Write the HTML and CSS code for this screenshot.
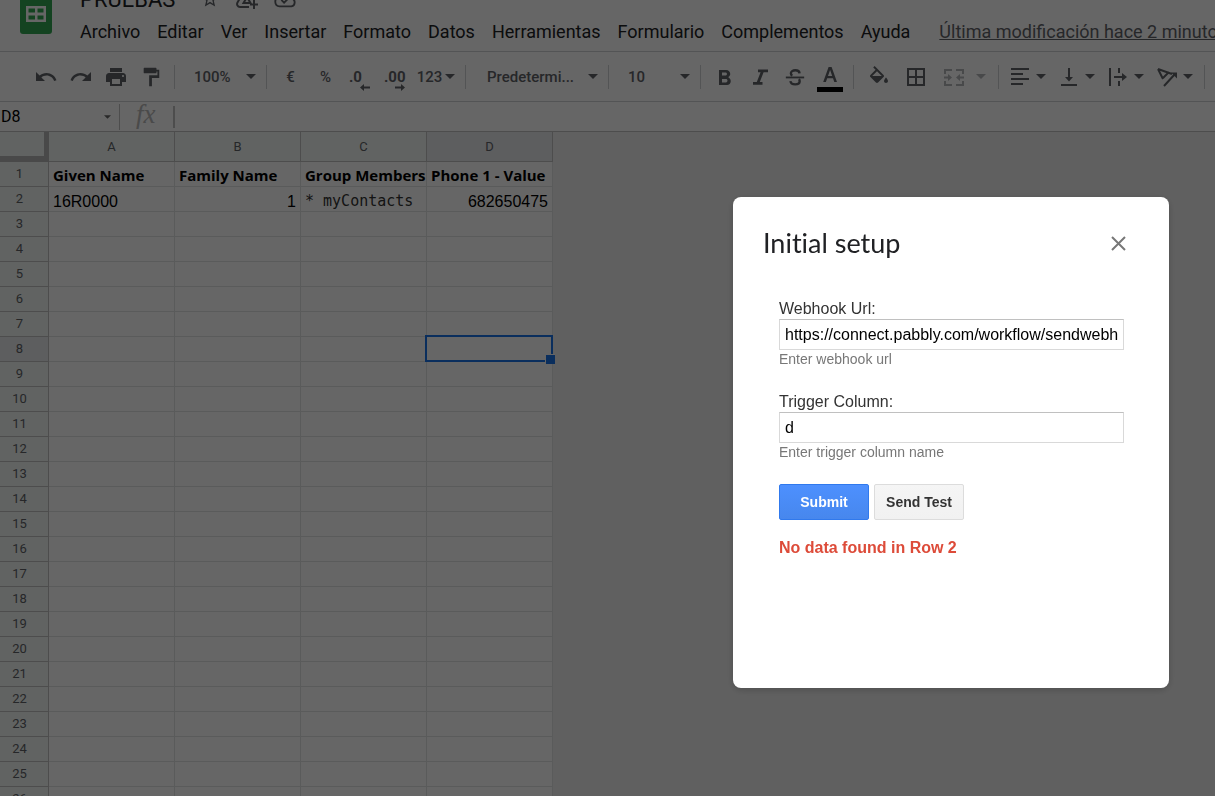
FILE: index.html
```html
<!DOCTYPE html>
<html lang="es">
<head>
    <meta charset="UTF-8">
    <meta name="viewport" content="width=device-width, initial-scale=1.0">
    <link rel="stylesheet" href="styles.css">
    <title>PRUEBAS</title>
</head>
<body>
<svg class="defs" aria-hidden="true">
    <symbol id="caret" viewBox="0 0 10 5"><path d="M0 0h10L5 5z"/></symbol>
</svg>

<header class="header">
    <a href="#" class="logo" aria-label="Sheets">
        <svg viewBox="0 0 32 46" width="32" height="46"><path d="M3 0h19l10 10v33a3 3 0 0 1-3 3H3a3 3 0 0 1-3-3V3a3 3 0 0 1 3-3z" fill="#34a853"/><path d="M6 18h20v16H6zM8.500 20.500v4h6.500v-4zM17.500 20.500v4h6v-4zM8.500 27.500v4h6.500v-4zM17.500 27.500v4h6v-4z" fill="#fff" fill-rule="evenodd"/></svg>
    </a>
    <div class="header-main">
        <div class="title-row">
            <span class="doc-title">PRUEBAS</span>
            <button class="icon-btn" aria-label="Destacar"><svg viewBox="0 0 24 24" width="20" height="20"><path d="M22 9.240l-7.190-.62L12 2 9.190 8.630 2 9.240l5.460 4.730L5.820 21 12 17.270 18.180 21l-1.630-7.030L22 9.240zM12 15.400l-3.760 2.270 1-4.280-3.320-2.880 4.380-.38L12 6.100l1.710 4.040 4.380.38-3.320 2.880 1 4.280L12 15.400z"/></svg></button>
            <button class="icon-btn" aria-label="Mover"><svg viewBox="0 0 24 24" width="24" height="24" fill="none" stroke="currentColor" stroke-width="2"><path d="M14 20H5a3 3 0 0 1-2.500-4.500L9 4h6l4 7M8.500 16l3.500-6 3.500 6zM19 13v9M15 17.500h8"/></svg></button>
            <button class="icon-btn" aria-label="Guardado"><svg viewBox="0 0 24 24" width="22" height="22" fill="none" stroke="currentColor" stroke-width="2"><path d="M19 20H6a5 5 0 0 1-.5-9.900 7 7 0 0 1 13.300 1.400A4.300 4.300 0 0 1 19 20zM8 13l3 3 5-5"/></svg></button>
        </div>
        <nav class="menu">
            <button>Archivo</button>
            <button>Editar</button>
            <button>Ver</button>
            <button>Insertar</button>
            <button>Formato</button>
            <button>Datos</button>
            <button>Herramientas</button>
            <button>Formulario</button>
            <button>Complementos</button>
            <button>Ayuda</button>
            <a href="#" class="last-edit">Última modificación hace 2 minutos</a>
        </nav>
    </div>
</header>

<div class="toolbar">
    <div class="group">
        <button aria-label="Deshacer"><svg viewBox="0 0 24 24" width="24" height="24"><path d="M12.500 8c-2.650 0-5.050.990-6.900 2.600L2 7v9h9l-3.620-3.620c1.390-1.160 3.160-1.880 5.120-1.880 3.540 0 6.550 2.310 7.600 5.500l2.370-.78C21.080 11.030 17.150 8 12.500 8z"/></svg></button>
        <button aria-label="Rehacer"><svg viewBox="0 0 24 24" width="24" height="24"><path d="M18.400 10.600C16.550 8.990 14.150 8 11.500 8c-4.650 0-8.580 3.030-9.960 7.220L3.900 16c1.050-3.190 4.050-5.500 7.600-5.500 1.950 0 3.730.72 5.120 1.880L13 16h9V7l-3.600 3.600z"/></svg></button>
        <button aria-label="Imprimir"><svg viewBox="0 0 24 24" width="24" height="24"><path d="M19 8H5c-1.660 0-3 1.340-3 3v6h4v4h12v-4h4v-6c0-1.660-1.340-3-3-3zm-3 11H8v-5h8v5zm3-7c-.55 0-1-.45-1-1s.45-1 1-1 1 .45 1 1-.45 1-1 1zm-1-9H6v4h12V3z"/></svg></button>
        <button aria-label="Copiar formato"><svg viewBox="0 0 24 24" width="22" height="22"><path d="M18 4V3c0-.55-.45-1-1-1H5c-.55 0-1 .45-1 1v4c0 .55.45 1 1 1h12c.55 0 1-.45 1-1V6h1v4H10v12h3v-9h8V4h-3z"/></svg></button>
    </div>
    <label class="drop zoom"><select aria-label="Zoom"><option>100%</option></select><svg class="caret"><use href="#caret"/></svg></label>
    <div class="group">
        <button aria-label="Moneda">€</button>
        <button aria-label="Porcentaje">%</button>
        <button class="decimal" aria-label="Reducir decimales">.0<svg viewBox="0 0 10 7" width="10" height="7"><path d="M0 3.500L4 0v2.500h6v2H4V7z"/></svg></button>
        <button class="decimal" aria-label="Aumentar decimales">.00<svg viewBox="0 0 10 7" width="10" height="7"><path d="M10 3.500L6 0v2.500H0v2h6V7z"/></svg></button>
        <button class="formats">123<svg class="caret"><use href="#caret"/></svg></button>
    </div>
    <label class="drop font"><select aria-label="Fuente"><option>Predetermi...</option></select><svg class="caret"><use href="#caret"/></svg></label>
    <label class="drop size"><select aria-label="Tamaño"><option>10</option></select><svg class="caret"><use href="#caret"/></svg></label>
    <div class="group">
        <button aria-label="Negrita"><svg viewBox="0 0 24 24" width="24" height="24"><path d="M15.600 11.790c.970-.67 1.650-1.770 1.650-2.790 0-2.260-1.750-4-4-4H6v15h8.040c2.090 0 3.710-1.700 3.710-3.790 0-1.520-.86-2.820-2.150-3.420zM9 7.500h3.500c.83 0 1.500.67 1.500 1.500s-.67 1.500-1.500 1.500H9v-3zm4 10H9V14h4c.83 0 1.500.67 1.500 1.500S13.830 17.500 13 17.500z"/></svg></button>
        <button aria-label="Cursiva"><svg viewBox="0 0 24 24" width="24" height="24"><path d="M10 4.500v2.700h2.600L8.800 17H5v2.700h9.500V17h-2.700L15.600 7.200H20V4.500z"/></svg></button>
        <button aria-label="Tachado"><svg viewBox="0 0 24 24" width="22" height="22" fill="none" stroke="currentColor"><path d="M2 12.500h20" stroke-width="2"/><path d="M17 8c-.2-2-2-3.300-4.700-3.300C9.600 4.700 7.500 6 7.500 8c0 1.200.5 2 1.500 2.700M7 16.500c.3 2.300 2.300 3.500 5.200 3.500 3 0 4.900-1.300 4.900-3.400 0-1-.3-1.700-.9-2.300" stroke-width="2.600"/></svg></button>
        <button aria-label="Color del texto"><svg viewBox="0 0 26 32" width="26" height="32"><path d="M11.600 6h3L20 21h-2.700L16 17.200h-5.800L8.900 21H6.200zM13.100 9l-2.100 6h4.200z"/><path d="M0 26h26v5H0z" fill="#000"/></svg></button>
    </div>
    <div class="group wide">
        <button aria-label="Color de relleno"><svg viewBox="0 0 24 24" width="24" height="24"><path d="M16.560 8.940L7.620 0 6.210 1.410l2.380 2.380-5.150 5.150c-.59.590-.59 1.540 0 2.120l5.500 5.500c.290.290.680.440 1.060.440s.770-.15 1.060-.44l5.500-5.500c.590-.58.590-1.530 0-2.120zM5.210 10L10 5.210 14.790 10zM19 11.500s-2 2.170-2 3.500c0 1.100.9 2 2 2s2-.9 2-2c0-1.330-2-3.500-2-3.500z" transform="translate(0 1)"/></svg></button>
        <button aria-label="Bordes"><svg viewBox="0 0 24 24" width="24" height="24"><path d="M3 3v18h18V3H3zm8 16H5v-6h6v6zm0-8H5V5h6v6zm8 8h-6v-6h6v6zm0-8h-6V5h6v6z"/></svg></button>
        <button class="merge" aria-label="Combinar celdas" disabled><svg viewBox="0 0 24 24" width="24" height="24"><path d="M2 4h8v2H4v3H2zM14 4h8v5h-2V6h-6zM2 16h2v3h6v2H2zM20 16h2v5h-8v-2h6zM2 11.500h4V9l4 3.500L6 16v-2.500H2zM22 11.500h-4V9l-4 3.500 4 3.500v-2.500h4z"/></svg><svg class="caret"><use href="#caret"/></svg></button>
    </div>
    <div class="group aligns">
        <button aria-label="Alinear horizontalmente"><svg viewBox="0 0 24 24" width="24" height="24"><path d="M3 3h18v2H3zM3 8h12v2H3zM3 13h18v2H3zM3 18h12v2H3z"/></svg><svg class="caret"><use href="#caret"/></svg></button>
        <button aria-label="Alinear verticalmente"><svg viewBox="0 0 24 24" width="24" height="24"><path d="M16 12h-3V3h-2v9H8l4 4.500zM4 19v2h16v-2z"/></svg><svg class="caret"><use href="#caret"/></svg></button>
        <button aria-label="Ajuste de texto"><svg viewBox="0 0 24 24" width="24" height="24"><path d="M3 3h2v18H3zM12 3h2v5h-2zM12 16h2v5h-2zM8 11h8V8l5 4-5 4v-3H8z"/></svg><svg class="caret"><use href="#caret"/></svg></button>
        <button aria-label="Rotación de texto"><svg viewBox="0 0 24 24" width="24" height="24" fill="none" stroke="currentColor" stroke-width="2"><path d="M3 4l14 5M3 4l5 10M8 13l6-6M9 21L20 9"/><path d="M16 7.500h6v6z" fill="currentColor" stroke="none"/></svg><svg class="caret"><use href="#caret"/></svg></button>
    </div>
    <div class="group"></div>
</div>

<div class="formula-bar">
    <label class="name-box"><input type="text" value="D8" aria-label="Cuadro de nombres"><svg class="caret"><use href="#caret"/></svg></label>
    <label for="formula" class="fx">fx</label>
    <input type="text" id="formula" class="formula">
</div>

<main class="sheet">
    <table class="grid">
        <thead>
            <tr><th class="corner"></th><th>A</th><th>B</th><th>C</th><th class="current">D</th></tr>
        </thead>
        <tbody>
            <tr class="names"><th>1</th><td>Given Name</td><td>Family Name</td><td>Group Membership</td><td>Phone 1 - Value</td></tr>
            <tr><th>2</th><td>16R0000</td><td class="num">1</td><td class="mono">* myContacts</td><td class="num">682650475</td></tr>
            <tr><th>3</th><td></td><td></td><td></td><td></td></tr>
            <tr><th>4</th><td></td><td></td><td></td><td></td></tr>
            <tr><th>5</th><td></td><td></td><td></td><td></td></tr>
            <tr><th>6</th><td></td><td></td><td></td><td></td></tr>
            <tr><th>7</th><td></td><td></td><td></td><td></td></tr>
            <tr><th class="current">8</th><td></td><td></td><td></td><td class="selected"></td></tr>
            <tr><th>9</th><td></td><td></td><td></td><td></td></tr>
            <tr><th>10</th><td></td><td></td><td></td><td></td></tr>
            <tr><th>11</th><td></td><td></td><td></td><td></td></tr>
            <tr><th>12</th><td></td><td></td><td></td><td></td></tr>
            <tr><th>13</th><td></td><td></td><td></td><td></td></tr>
            <tr><th>14</th><td></td><td></td><td></td><td></td></tr>
            <tr><th>15</th><td></td><td></td><td></td><td></td></tr>
            <tr><th>16</th><td></td><td></td><td></td><td></td></tr>
            <tr><th>17</th><td></td><td></td><td></td><td></td></tr>
            <tr><th>18</th><td></td><td></td><td></td><td></td></tr>
            <tr><th>19</th><td></td><td></td><td></td><td></td></tr>
            <tr><th>20</th><td></td><td></td><td></td><td></td></tr>
            <tr><th>21</th><td></td><td></td><td></td><td></td></tr>
            <tr><th>22</th><td></td><td></td><td></td><td></td></tr>
            <tr><th>23</th><td></td><td></td><td></td><td></td></tr>
            <tr><th>24</th><td></td><td></td><td></td><td></td></tr>
            <tr><th>25</th><td></td><td></td><td></td><td></td></tr>
            <tr><th>26</th><td></td><td></td><td></td><td></td></tr>
        </tbody>
    </table>
</main>

<div class="overlay">
    <div class="modal" role="dialog" aria-labelledby="modal-title">
        <div class="modal-header">
            <h1 id="modal-title">Initial setup</h1>
            <button class="close" aria-label="Close"><svg viewBox="0 0 15 15" width="15" height="15"><path d="M1 1l13 13M14 1L1 14" stroke="#777" stroke-width="2"/></svg></button>
        </div>
        <form class="modal-body">
            <div class="field">
                <label for="webhook">Webhook Url:</label>
                <input type="text" id="webhook" value="https://connect.pabbly.com/workflow/sendwebhookdata/">
                <small>Enter webhook url</small>
            </div>
            <div class="field">
                <label for="trigger">Trigger Column:</label>
                <input type="text" id="trigger" value="d">
                <small>Enter trigger column name</small>
            </div>
            <div class="actions">
                <button type="button" class="btn primary">Submit</button>
                <button type="button" class="btn">Send Test</button>
            </div>
            <p class="error">No data found in Row 2</p>
        </form>
    </div>
</div>
</body>
</html>
```
FILE: styles.css
```css
/* Global */
* {
    box-sizing: border-box;
}

html, body {
    height: 100%;
}

body {
    margin: 0;
    overflow: hidden;
    display: flex;
    flex-direction: column;
    background: #fff;
    color: #202124;
    font-family: Roboto, "Liberation Sans", sans-serif;
}

button, input, select {
    font: inherit;
    color: inherit;
    margin: 0;
    padding: 0;
    border: 0;
    border-radius: 0;
    background: none;
}

button {
    cursor: pointer;
}

svg {
    flex: none;
    fill: currentColor;
}

svg[fill="none"] {
    fill: none;
}

.defs {
    display: none;
}

.caret {
    width: 10px;
    height: 5px;
}

/* Header */
.header {
    flex: none;
    display: flex;
    align-items: flex-end;
    gap: 28px;
    height: 52px;
    padding: 0 0 7px 20px;
    border-bottom: 1px solid #d0d2d5;
}

.logo {
    display: flex;
    padding-bottom: 10px;
}

.header-main {
    min-width: 0;
}

.title-row {
    display: flex;
    align-items: center;
    gap: 15px;
    height: 30px;
    margin-bottom: 6px;
    color: #5f6368;
}

.title-row .icon-btn {
    display: flex;
}

.doc-title {
    margin-right: 10px;
    font-size: 22px;
    color: #202124;
}

.menu {
    display: flex;
    gap: 17px;
    font-size: 18px;
    line-height: 24px;
    white-space: nowrap;
}

.last-edit {
    margin-left: 12px;
    color: #5f6368;
}

/* Toolbar */
.toolbar {
    flex: none;
    display: flex;
    align-items: center;
    height: 50px;
    padding-left: 22px;
    border-bottom: 1px solid #d0d2d5;
    color: #5f6368;
    font-size: 15px;
    font-weight: 500;
    white-space: nowrap;
}

.toolbar > * {
    flex: none;
    display: flex;
    align-items: center;
    height: 24px;
    padding: 0 6px;
    border-left: 1px solid #d0d2d5;
}

.toolbar > :first-child {
    border-left: 0;
}

.toolbar button {
    display: flex;
    align-items: center;
    justify-content: center;
    width: 35px;
    height: 32px;
}

.toolbar .drop {
    padding-right: 10px;
}

.drop select {
    appearance: none;
    flex: 1;
    min-width: 0;
}

.zoom, .size {
    width: 92px;
    padding-left: 19px;
}

.font {
    width: 143px;
    padding-left: 21px;
}

.toolbar .decimal {
    position: relative;
    justify-content: flex-start;
    padding-left: 6px;
    font-weight: 700;
}

.decimal svg {
    position: absolute;
    right: 8px;
    bottom: 2px;
}

.toolbar .formats {
    width: 46px;
    gap: 3px;
}

.toolbar .wide {
    gap: 2px;
    padding-left: 7px;
}

.toolbar .merge {
    width: 57px;
    gap: 10px;
    color: #b4b6b9;
}

.aligns {
    gap: 3px;
}

.toolbar .aligns button {
    width: 46px;
    gap: 4px;
    padding-right: 2px;
}

/* Formula bar */
.formula-bar {
    flex: none;
    display: flex;
    align-items: center;
    height: 30px;
    border-bottom: 1px solid #c0c0c0;
}

.name-box {
    display: flex;
    align-items: center;
    width: 120px;
    height: 26px;
    padding: 0 8px 0 1px;
    border-right: 1px solid #c0c0c0;
    color: #666;
}

.name-box .caret {
    width: 7px;
    height: 4px;
}

.name-box input {
    flex: 1;
    min-width: 0;
    color: #000;
    font-size: 16px;
}

.fx {
    width: 53px;
    padding: 0 0 5px 16px;
    color: #b8b8b8;
    font: italic 27px/24px "Liberation Serif", serif;
}

.formula {
    flex: 1;
    height: 22px;
    border-left: 2px solid #c0c0c0;
}

/* Sheet */
.sheet {
    flex: 1;
    min-height: 0;
    overflow: hidden;
    background: #f1f1f1;
}

.grid {
    width: 553px;
    table-layout: fixed;
    border-spacing: 0;
    background: #fff;
}

.grid th, .grid td {
    height: 25px;
    padding: 0;
    border: 0 solid #e2e3e3;
    border-width: 0 1px 1px 0;
    overflow: hidden;
    white-space: nowrap;
}

.grid th {
    background: #f3f8f5;
    border-color: #c0c0c0;
    color: #5f6368;
    font-size: 13px;
    font-weight: 400;
}

.grid tbody th {
    padding: 0 9px 2px 0;
}

.grid thead th {
    height: 30px;
}

.grid thead .corner {
    width: 49px;
    border-right: 5px solid #b7b7b7;
    border-bottom: 6px solid #b7b7b7;
}

.grid .current {
    background: #e8eaed;
}

.grid td {
    padding: 6px 4px 0;
    color: #000;
    font: 16px/18px "Liberation Sans", Arial, sans-serif;
}

.grid .names td {
    padding-top: 2px;
    font: bold 15px/22px "Open Sans", "Noto Sans", sans-serif;
}

.grid td.num {
    text-align: right;
}

.grid td.mono {
    padding-top: 4px;
    color: #333;
    font: 15px/20px "DejaVu Sans Mono", monospace;
}

.grid .selected {
    position: relative;
    overflow: visible;
}

.selected::before {
    content: "";
    position: absolute;
    inset: -2px -1px -1px -2px;
    border: 2px solid #1a73e8;
}

.selected::after {
    content: "";
    position: absolute;
    right: -3px;
    bottom: -3px;
    width: 9px;
    height: 9px;
    border: 1px solid #fff;
    border-width: 1px 0 0 1px;
    background: #1a73e8;
}

/* Modal */
.overlay {
    position: fixed;
    inset: 0;
    display: flex;
    justify-content: flex-end;
    align-items: flex-start;
    padding: 197px 46px 0;
    background: rgba(0, 0, 0, 0.6);
}

.modal {
    width: 436px;
    min-height: 491px;
    padding: 30px 43px 30px 30px;
    border-radius: 8px;
    background: #fff;
    box-shadow: 0 2px 8px rgba(0, 0, 0, 0.2);
    font-family: "Liberation Sans", Arial, sans-serif;
}

.modal-header {
    display: flex;
    justify-content: space-between;
    align-items: center;
    height: 32px;
}

.modal-header h1 {
    margin: 0;
    color: #202124;
    font: 400 27px/32px Lato, sans-serif;
    font-variant-ligatures: none;
}

.close {
    display: flex;
}

.modal-body {
    padding: 38px 2px 0 16px;
}

.field {
    display: flex;
    flex-direction: column;
    margin-bottom: 22px;
}

.field label {
    padding-top: 2px;
    color: #333;
    font-size: 16px;
    line-height: 20px;
}

.field input {
    height: 31px;
    padding: 0 5px;
    border: 1px solid #d9d9d9;
    border-top-color: #c0c0c0;
    color: #000;
    font-size: 16px;
}

.field small {
    color: #777;
    font-size: 14px;
    line-height: 18px;
}

.actions {
    display: flex;
    gap: 5px;
    padding-top: 1px;
}

.btn {
    width: 90px;
    height: 36px;
    border: 1px solid #dcdcdc;
    border-radius: 2px;
    background: linear-gradient(#f5f5f5, #f1f1f1);
    color: #333;
    font-size: 14px;
    font-weight: bold;
}

.btn.primary {
    border-color: #3079ed;
    background: linear-gradient(#4d90fe, #4787ed);
    color: #fff;
}

.error {
    margin: 18px 0 0;
    color: #dd4b39;
    font-size: 16px;
    font-weight: bold;
    line-height: 20px;
}
```
